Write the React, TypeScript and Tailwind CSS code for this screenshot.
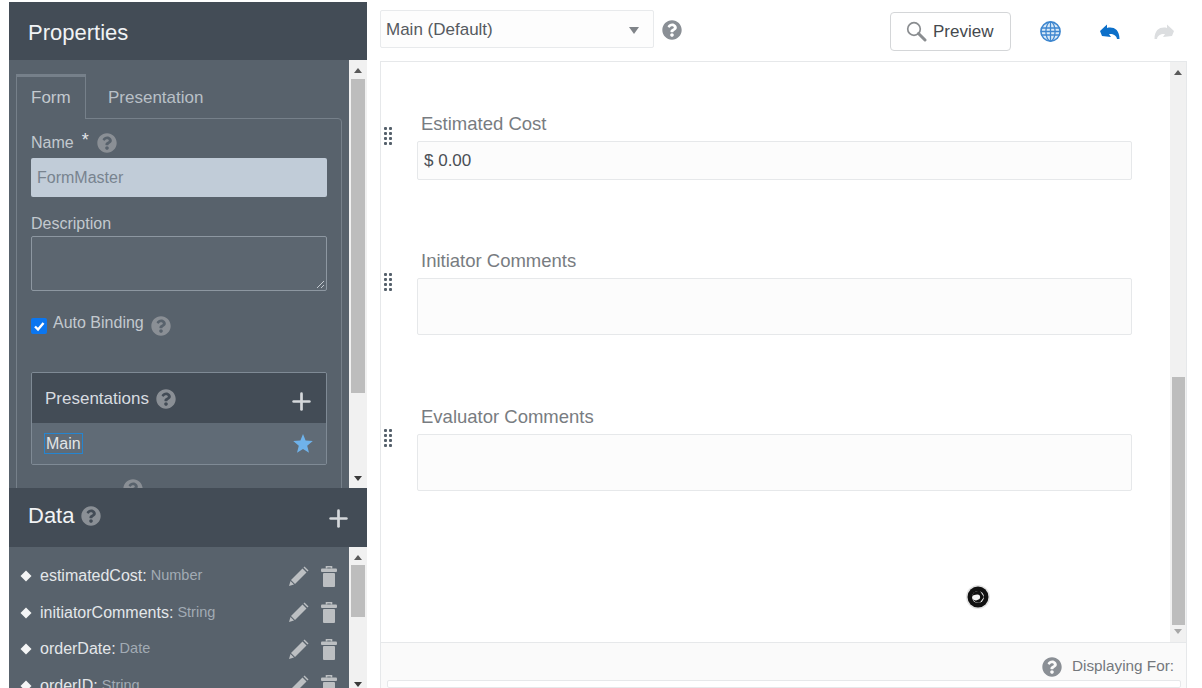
import React from 'react';
import { Plus } from 'lucide-react';
import { FaQuestionCircle } from 'react-icons/fa';

const Help = ({ size = 20, className = '' }: { size?: number; className?: string }) => (
    <FaQuestionCircle size={size} className={`text-[#8a8f95] shrink-0 ${className}`} />
);

const Arrow = ({ up = false }: { up?: boolean }) => (
    <div className={`w-0 h-0 border-x-[4px] border-x-transparent ${up ? 'border-b-[5px] border-b-[#5a5a5a]' : 'border-t-[5px] border-t-[#3a3a3a]'}`} />
);

const Scrollbar = ({ top, height, bottomPad }: { top: number; height: number; bottomPad: number }) => (
    <div className="w-[18px] shrink-0 bg-[#f1f1f1] flex flex-col items-center pt-[8px]">
        <Arrow up />
        <div className="w-[14px] bg-[#bdbdbd]" style={{ marginTop: top, height }} />
        <div className="mt-auto" style={{ paddingBottom: bottomPad }}>
            <Arrow />
        </div>
    </div>
);

const Grip = () => (
    <div className="grid grid-cols-2 gap-x-[2px] gap-y-[2px] w-[8px] ml-[1px]">
        {Array.from({ length: 8 }).map((_, i) => (
            <div key={i} className="size-[3px] rounded-[1px] bg-[#55606b]" />
        ))}
    </div>
);

const Pencil = () => (
    <svg width="21" height="21" viewBox="0 0 21 21" className="ml-auto shrink-0">
        <path d="M14.5 2.5 L18.5 6.5 L7 18 L3 14 Z" fill="#bcbfc2" />
        <path d="M15.5 1.5 L16.5 0.5 L20.5 4.5 L19.5 5.5 Z" fill="#bcbfc2" />
        <path d="M2.5 15 L6 18.5 L1 20 Z" fill="#bcbfc2" />
    </svg>
);

const Trash = () => (
    <svg width="16" height="21" viewBox="0 0 16 21" className="ml-[12px] shrink-0">
        <path d="M5.5 2.5 V0.8 H10.5 V2.5" fill="none" stroke="#bcbfc2" strokeWidth="1.6" />
        <rect x="0" y="2.5" width="16" height="3.5" rx="1" fill="#bcbfc2" />
        <rect x="2" y="7" width="12" height="14" rx="1" fill="#bcbfc2" />
    </svg>
);

const TurnArrow = ({ color, flip = false }: { color: string; flip?: boolean }) => (
    <svg width="20" height="16" viewBox="0 0 20 16" className={flip ? '-scale-x-100' : ''}>
        <path d="M0 7 L7 0.5 L7 4 C13 2.5 19.5 5 19.5 15 L17 15 C16.5 11 12.5 9.5 9 10 L11 13 L2 12 Z" fill={color} />
    </svg>
);

const dataRows = [
    { name: 'estimatedCost:', type: 'Number' },
    { name: 'initiatorComments:', type: 'String' },
    { name: 'orderDate:', type: 'Date' },
    { name: 'orderID:', type: 'String' },
];

const fields = [
    { label: 'Estimated Cost', value: '$ 0.00', h: 'h-[39px]', mt: 'mt-[50px]', grip: 'pt-[15px]' },
    { label: 'Initiator Comments', value: '', h: 'h-[57px]', mt: 'mt-[69px]', grip: 'pt-[24px]' },
    { label: 'Evaluator Comments', value: '', h: 'h-[57px]', mt: 'mt-[70px]', grip: 'pt-[24px]' },
];

const App = () => {
    return (
        <div className="w-[1202px] h-[688px] overflow-hidden bg-white flex font-['Liberation_Sans',Arial,sans-serif]">
            <div className="w-[358px] ml-[9px] mt-[2px] shrink-0 flex flex-col h-[686px]">
                <div className="h-[58px] shrink-0 bg-[#434c56] flex items-center pl-[19px] pt-[2px] text-[22px] text-[#f1f3f5]">
                    Properties
                </div>
                <div className="h-[428px] shrink-0 flex overflow-hidden bg-[#58626c]">
                    <div className="flex-1 pl-[7px] pr-[7px] pt-[14px] min-w-0">
                        <div className="flex h-[44px]">
                            <div className="w-[70px] border-t-[3px] border-x-[1px] border-[#76808a] pl-[14px] pt-[8px] text-[17px] text-[#c3c9cf] relative z-10 bg-[#58626c] h-[45px]">
                                Form
                            </div>
                            <div className="pl-[22px] pt-[11px] text-[17px] text-[#b9c0c7]">Presentation</div>
                        </div>
                        <div className="border border-[#76808a] rounded-tr-[4px] h-[400px] px-[14px] text-[#c3c9cf] text-[16px]">
                            <div className="flex items-center h-[38px] pt-[9px]">
                                <span>Name</span>
                                <span className="ml-[8px] mb-[6px] text-[18px] leading-[18px] text-[#e2e5e8]">*</span>
                                <Help className="ml-[8px]" />
                            </div>
                            <div className="h-[39px] mt-[1px] bg-[#c1ccd8] rounded-[2px] flex items-center pl-[6px] pt-[1px] text-[#78838f]">
                                FormMaster
                            </div>
                            <div className="mt-[18px] leading-[18px]">Description</div>
                            <div className="h-[55px] mt-[3px] border border-[#8d97a1] rounded-[2px] bg-[#5c6670] relative">
                                <svg width="9" height="9" viewBox="0 0 9 9" className="absolute right-[1px] bottom-[1px]">
                                    <path d="M1 8 L8 1 M5 8 L8 5" stroke="#c3c9cf" strokeWidth="1" />
                                </svg>
                            </div>
                            <div className="flex items-center mt-[24px] h-[22px]">
                                <div className="size-[16px] mb-[1px] rounded-[2px] bg-[#0b76f0] flex items-center justify-center shrink-0">
                                    <svg width="12" height="12" viewBox="0 0 12 12">
                                        <path d="M2 6.5 L5 9.5 L10.5 3" fill="none" stroke="white" strokeWidth="2.4" />
                                    </svg>
                                </div>
                                <span className="ml-[6px] mb-[6px]">Auto Binding</span>
                                <Help className="ml-[7px]" />
                            </div>
                            <div className="mt-[35px] h-[93px] border border-[#7f8a95] rounded-[2px] overflow-hidden flex flex-col">
                                <div className="h-[50px] shrink-0 bg-[#434c56] flex items-center pl-[13px] pr-[11px] text-[17px] text-[#d8dce0]">
                                    <span className="mt-[1px]">Presentations</span>
                                    <Help className="ml-[7px] mt-[1px]" />
                                    <Plus size={27} strokeWidth={2.4} className="ml-auto mt-[6px] text-[#d5d8db]" />
                                </div>
                                <div className="flex-1 bg-[#606b76] flex items-center pl-[12px] pr-[13px]">
                                    <span className="border border-[#2585d0] leading-[19px] px-[1px] text-[16px] text-[#e2e5e8]">Main</span>
                                    <svg width="20" height="19" viewBox="0 0 20 19" className="ml-auto shrink-0">
                                        <path d="M10 0 L12.6 6.6 L19.8 7.1 L14.2 11.7 L16 18.8 L10 14.9 L4 18.8 L5.8 11.7 L0.2 7.1 L7.4 6.6 Z" fill="#6fb2ea" />
                                    </svg>
                                </div>
                            </div>
                            <Help className="ml-[92px] mt-[14px]" />
                        </div>
                    </div>
                    <Scrollbar top={6} height={314} bottomPad={7} />
                </div>
                <div className="h-[59px] shrink-0 bg-[#434c56] flex items-center pl-[19px] pr-[15px] text-[22px] text-[#f1f3f5] relative z-10">
                    <span className="mb-[5px]">Data</span>
                    <Help className="ml-[7px] mb-[3px]" />
                    <Plus size={27} strokeWidth={2.4} className="ml-auto mt-[2px] text-[#d5d8db]" />
                </div>
                <div className="flex-1 min-h-0 flex overflow-hidden bg-[#58626c]">
                    <div className="flex-1 min-w-0 pt-[11px] pl-[11px] pr-[12px]">
                        {dataRows.map(row => (
                            <div key={row.name} className="flex items-center h-[36.5px] text-[16px]">
                                <svg width="12" height="12" viewBox="0 0 12 12" className="shrink-0">
                                    <path d="M6 0.5 L11.5 6 L6 11.5 L0.5 6 Z" fill="#f4f5f6" />
                                </svg>
                                <span className="ml-[8px] text-[#e4e7ea]">{row.name}</span>
                                <span className="ml-[4px] text-[14.5px] text-[#a2abb4]">{row.type}</span>
                                <Pencil />
                                <Trash />
                            </div>
                        ))}
                    </div>
                    <Scrollbar top={5} height={52} bottomPad={1} />
                </div>
            </div>
            <div className="w-[807px] ml-[13px] shrink-0 flex flex-col h-[688px]">
                <div className="h-[61px] shrink-0 flex items-start pt-[10px]">
                    <div className="w-[274px] h-[38px] border border-[#e8eaec] rounded-[2px] bg-[#fdfdfd] flex items-center pl-[5px] pr-[14px] text-[17px] text-[#555a60]">
                        <span className="mt-[1px]">Main (Default)</span>
                        <div className="ml-auto mt-[3px] w-0 h-0 border-x-[5px] border-x-transparent border-t-[7px] border-t-[#808489]" />
                    </div>
                    <Help className="ml-[8px] mt-[10px]" />
                    <div className="ml-[208px] mt-[2px] w-[121px] h-[39px] border border-[#d4d6d8] rounded-[4px] flex items-center pl-[15px] text-[17px] text-[#45494e]">
                        <svg width="21" height="21" viewBox="0 0 21 21" className="shrink-0 mt-[-1px]" fill="none" stroke="#8a8d90">
                            <circle cx="8" cy="8" r="6.3" strokeWidth="1.7" />
                            <path d="M12.5 12.5 L19 19" strokeWidth="3" strokeLinecap="round" />
                        </svg>
                        <span className="ml-[6px] mt-[1px]">Preview</span>
                    </div>
                    <svg width="21" height="21" viewBox="0 0 21 21" className="ml-[29px] mt-[11px] shrink-0" fill="none" stroke="#3f87cf" strokeWidth="1.3">
                        <circle cx="10.5" cy="10.5" r="9.6" fill="#dcebf8" strokeWidth="1.6" />
                        <ellipse cx="10.5" cy="10.5" rx="4.6" ry="9.6" />
                        <path d="M10.5 1 V20 M1.5 7 H19.5 M1 10.5 H20 M1.5 14 H19.5" />
                    </svg>
                    <div className="ml-[39px] mt-[14px]"><TurnArrow color="#0c6fc9" /></div>
                    <div className="ml-[34px] mt-[14px]"><TurnArrow color="#dcdee0" flip /></div>
                </div>
                <div className="h-[581px] shrink-0 border-l border-t border-r border-[#e6e8ea] flex">
                    <div className="flex-1 min-w-0 pl-[2px] pr-[38px] flex flex-col">
                        {fields.map(f => (
                            <div key={f.label} className={`flex ${f.mt}`}>
                                <div className={`w-[34px] shrink-0 ${f.grip}`}><Grip /></div>
                                <div className="flex-1 min-w-0">
                                    <div className="h-[29px] pl-[4px] pt-[1px] text-[18.5px] leading-[22px] text-[#787c81]">{f.label}</div>
                                    <div className={`${f.h} border border-[#e6e8ea] rounded-[2px] bg-[#fcfcfc] pl-[6px] flex items-center text-[17px] text-[#4a4f55]`}>
                                        {f.value}
                                    </div>
                                </div>
                            </div>
                        ))}
                    </div>
                    <div className="w-[16px] shrink-0 bg-[#f1f1f1] flex flex-col items-center pt-[8px] relative">
                        <Arrow up />
                        <div className="w-[13px] h-[248px] bg-[#bdbdbd] mt-[302px]" />
                        <div className="mt-[4px] w-0 h-0 border-x-[4px] border-x-transparent border-t-[5px] border-t-[#a8a8a8]" />
                    </div>
                    <svg width="26" height="26" viewBox="0 0 26 26" className="absolute left-[965px] top-[584px]">
                        <circle cx="13" cy="13" r="12" fill="#e4e4e4" />
                        <circle cx="13" cy="13" r="10.5" fill="#111" />
                        <circle cx="13" cy="13" r="6" fill="#f5f5f5" />
                        <path d="M13 7 C9 7 7 10 7 13 C8 11 10 10.5 12 11 C14 11.5 14.5 14 13 15.5 C11.5 17 9 16.5 8 15 C9 18 12 19.5 15 18.5 L19 13 L15 7 Z" fill="#111" />
                        <circle cx="12.5" cy="13" r="2.6" fill="#f5f5f5" />
                    </svg>
                </div>
                <div className="flex-1 min-h-0 border-t border-x border-[#e6e8ea] bg-[#fafafa] flex flex-col">
                    <div className="h-[37px] shrink-0 flex items-center justify-end pt-[10px] pr-[12px] text-[15.3px] text-[#74787d]">
                        <Help className="mr-[10px]" />
                        <span>Displaying For:</span>
                    </div>
                    <div className="flex-1 ml-[6px] mr-[5px] border border-[#e6e8ea] rounded-[2px] bg-white" />
                </div>
            </div>
        </div>
    );
};

export default App;
